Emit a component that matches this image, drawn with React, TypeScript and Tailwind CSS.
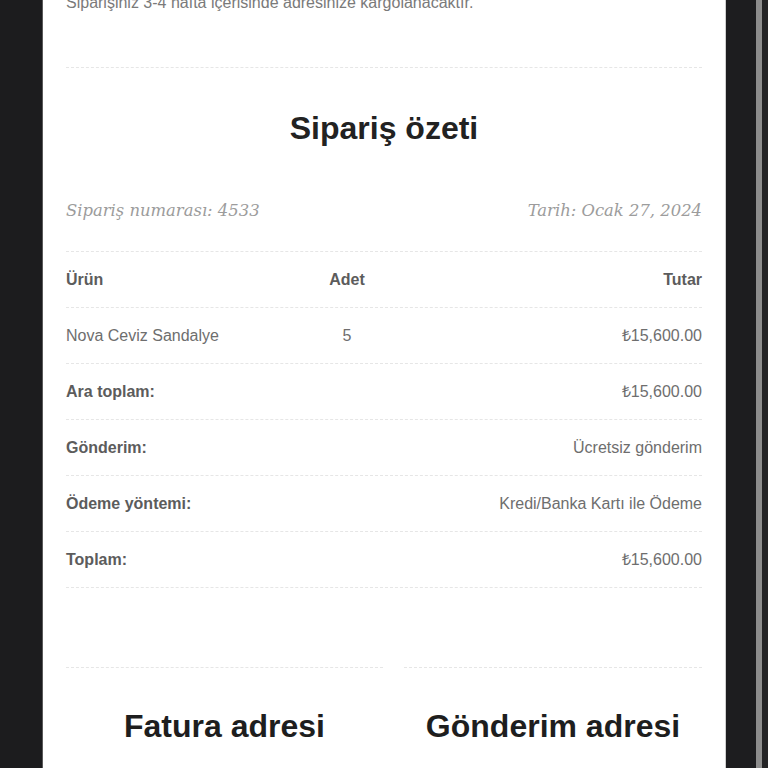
const rows = [
  { label: 'Ara toplam:', value: '₺15,600.00' },
  { label: 'Gönderim:', value: 'Ücretsiz gönderim' },
  { label: 'Ödeme yöntemi:', value: 'Kredi/Banka Kartı ile Ödeme' },
  { label: 'Toplam:', value: '₺15,600.00' },
];

export default function App() {
  return (
    <div className="flex h-screen w-full overflow-hidden bg-[#1c1c1e] font-['Liberation_Sans',Arial,sans-serif]">
      <div className="w-[43px] shrink-0 border-r border-[#5a5a5a]" />
      <div className="w-[682px] shrink-0 bg-white px-[23px]">
        <p className="-mt-[9px] text-[16px] leading-6 text-[#7a7a7a]">
          Siparişiniz 3-4 hafta içerisinde adresinize kargolanacaktır.
        </p>
        <div className="mt-[52px] border-t border-dashed border-[#e6e6e6]" />

        <h2 className="mt-[40px] text-center text-[32px] font-bold leading-10 text-[#222]">Sipariş özeti</h2>

        <div className="mt-[51px] flex justify-between font-['DejaVu_Serif',Georgia,serif] text-[16.4px] italic leading-6 text-[#9c9c9c]">
          <span>Sipariş numarası: 4533</span>
          <span>Tarih: Ocak 27, 2024</span>
        </div>
        <div className="mt-[28px] border-t border-dashed border-[#e6e6e6]" />

        <div className="grid h-[56px] grid-cols-[250px_62px_1fr] items-center border-b border-dashed border-[#e6e6e6] text-[16px] font-bold text-[#5c5c5c]">
          <span>Ürün</span>
          <span className="text-center">Adet</span>
          <span className="text-right">Tutar</span>
        </div>
        <div className="grid h-[56px] grid-cols-[250px_62px_1fr] items-center border-b border-dashed border-[#e6e6e6] text-[16px] text-[#6e6e6e]">
          <span>Nova Ceviz Sandalye</span>
          <span className="text-center">5</span>
          <span className="text-right">₺15,600.00</span>
        </div>
        {rows.map((r) => (
          <div
            key={r.label}
            className="flex h-[56px] items-center justify-between border-b border-dashed border-[#e6e6e6] text-[16px]"
          >
            <span className="font-bold text-[#5c5c5c]">{r.label}</span>
            <span className="text-[#6e6e6e]">{r.value}</span>
          </div>
        ))}

        <div className="mt-[79px] flex">
          <div className="w-[317px]">
            <div className="border-t border-dashed border-[#e6e6e6]" />
            <h3 className="mt-[38px] text-center text-[32px] font-bold leading-10 text-[#1e1e1e]">Fatura adresi</h3>
          </div>
          <div className="ml-[21px] flex-1">
            <div className="border-t border-dashed border-[#e6e6e6]" />
            <h3 className="mt-[38px] text-center text-[32px] font-bold leading-10 text-[#1e1e1e]">Gönderim adresi</h3>
          </div>
        </div>
      </div>
      <div className="w-[31px] shrink-0 border-l border-[#cfcfcf] bg-[#1d1d1f]" />
      <div className="w-[6px] shrink-0 bg-[#8c8c8c]" />
      <div className="flex-1 bg-[#232325]" />
    </div>
  );
}
